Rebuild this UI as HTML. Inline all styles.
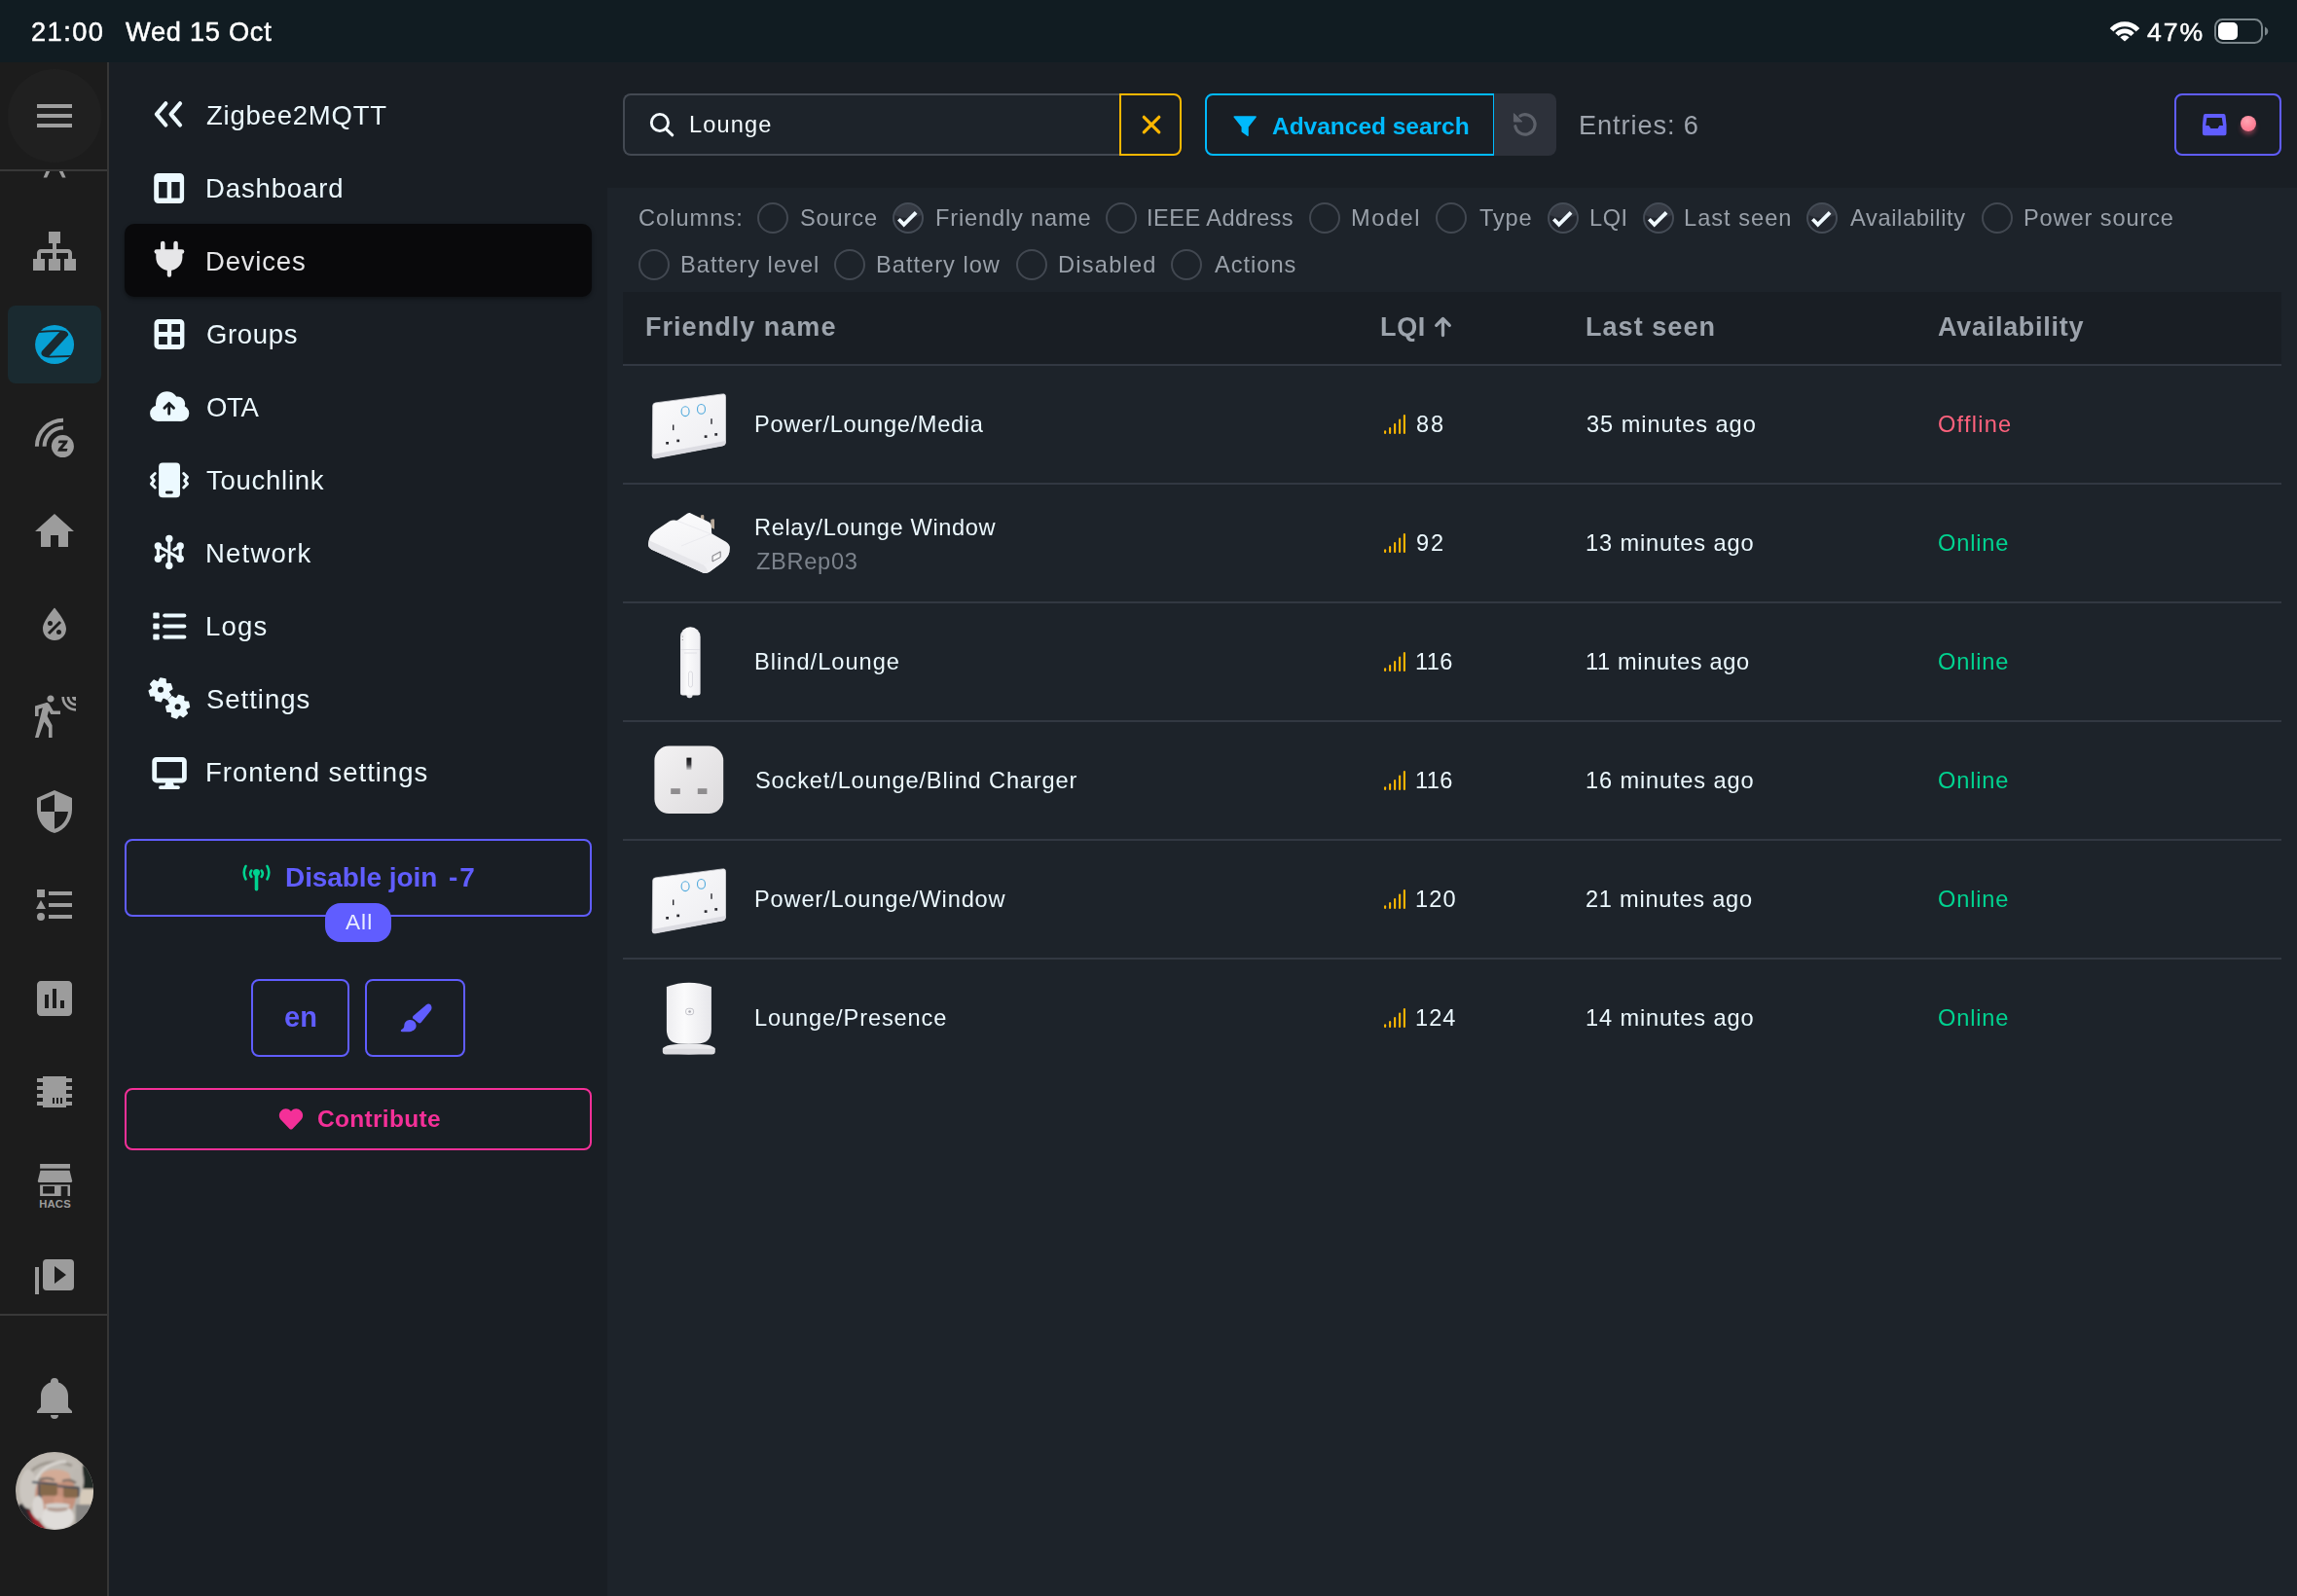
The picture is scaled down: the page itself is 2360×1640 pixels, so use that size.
<!DOCTYPE html>
<html lang="en"><head><meta charset="utf-8"><title>Zigbee2MQTT - Devices</title>
<style>
html,body{margin:0;padding:0;background:#1d232a;}
body{width:2360px;height:1640px;position:relative;overflow:hidden;font-family:"Liberation Sans",sans-serif;}
.b{position:absolute;box-sizing:border-box;display:block;}
.t{position:absolute;white-space:nowrap;line-height:1;will-change:transform;}
</style></head><body>
<div class="layers" aria-hidden="true">
<div class="b" style="left:0px;top:0px;width:2360px;height:64px;background:#111c22;"></div>
<div class="b" style="left:0px;top:64px;width:112px;height:1576px;background:#1c1c1c;border-right:2px solid #363636;"></div>
<div class="b" style="left:112px;top:64px;width:2248px;height:1576px;background:#191e24;"></div>
<div class="b" style="left:624px;top:193px;width:1736px;height:1447px;background:#1d232a;"></div>
</div>
<header class="statusbar" aria-label="Status bar">
<span class="t" style="left:32.0px;top:19.0px;font-size:27.2px;color:#fff;letter-spacing:1.45px;-webkit-text-stroke:0.5px #fff;">21:00</span>
<span class="t" style="left:128.8px;top:19.0px;font-size:27.2px;color:#fff;letter-spacing:0.74px;-webkit-text-stroke:0.5px #fff;">Wed 15 Oct</span>
<span class="t" style="left:2206.2px;top:19.6px;font-size:26.6px;color:#fff;letter-spacing:1.90px;-webkit-text-stroke:0.5px #fff;">47%</span>
<svg class="b" style="left:2164px;top:18px;" width="40" height="28" viewBox="2164 18 40 28"><defs><clipPath id="wf"><path d="M2183,42.500L2159.500,22L2159.500,10H2206.500V22Z"/></clipPath></defs>
<g clip-path="url(#wf)" fill="none" stroke="#fff"><circle cx="2183" cy="42.300" r="17.600" stroke-width="4.900"/><circle cx="2183" cy="42.300" r="10.500" stroke-width="4.700"/><circle cx="2183" cy="42.300" r="3" stroke-width="6" /></g></svg>
<div class="b" style="left:2275px;top:19px;width:50px;height:26px;border:2.4px solid #7b868b;border-radius:8.500px;"></div>
<div class="b" style="left:2279px;top:23px;width:20px;height:18px;background:#fff;border-radius:5px;"></div>
<svg class="b" style="left:2326px;top:24px;" width="6" height="16" viewBox="2326 24 6 16"><path fill="#7b868b" d="M2327,27.400Q2330.300,29 2330.300,32T2327,36.600Z"/></svg>
</header>
<aside class="ha-sidebar" aria-label="Home Assistant sidebar">
<div class="b" style="left:8px;top:71px;width:96px;height:96px;border-radius:50%;background:#202020;"></div>
<div class="b" style="left:0px;top:174px;width:110px;height:2px;background:#383838;"></div>
<div class="b" style="left:0px;top:1350px;width:110px;height:2px;background:#383838;"></div>
<div class="b" style="left:8px;top:314px;width:96px;height:80px;border-radius:8px;background:#1a2a30;"></div>
<svg class="b" style="left:32px;top:95px;" width="48" height="48" viewBox="0 0 24 24"><path fill="#9e9e9e" d="M3,6H21V8H3V6M3,11H21V13H3V11M3,16H21V18H3V16Z"/></svg>
<svg class="b" style="left:40px;top:176px;" width="32" height="8" viewBox="0 0 32 8"><path fill="#9c9c9c" d="M7.400,0H11.200L8.200,6.400H4.600ZM20.800,0H24.600L27.600,6.400H24Z"/></svg>
<svg class="b" style="left:32px;top:234px;" width="48" height="48" viewBox="0 0 24 24"><path fill="#9c9c9c" d="M9,2V8H11V11H5C3.89,11 3,11.89 3,13V16H1V22H7V16H5V13H11V16H9V22H15V16H13V13H19V16H17V22H23V16H21V13C21,11.89 20.11,11 19,11H13V8H15V2H9Z"/></svg>
<svg class="b" style="left:32px;top:330px;" width="48" height="48" viewBox="0 0 48 48"><circle cx="24.070" cy="24.050" r="20" fill="#07a1d5"/>
<path fill="#1a2a30" d="M6.200,11.100Q8,10.200 9.300,9.900Q18,9 27.600,9.300Q32,9.400 34.600,10Q37.200,10.800 37.800,12.500Q38.400,13.600 38.100,14.600L18.500,35.650L41.300,35.100L40.600,36.350Q39.500,36.800 38.100,36.900L17.750,37.600Q14.800,37.400 12.800,36.350Q10.500,35.200 10.400,33.200Q10.300,31.800 11.100,30.700L29.300,11.100Q18,11.300 7.900,12Z"/></svg>
<svg class="b" style="left:32px;top:426px;" width="48" height="48" viewBox="0 0 48 48"><path fill="none" stroke="#9c9c9c" stroke-width="4" d="M5.900,32.840A27.100,27.100 0 0 1 33,5.740"/>
<path fill="none" stroke="#9c9c9c" stroke-width="4" d="M13.600,32.840A19.400,19.400 0 0 1 33,13.440"/>
<circle cx="32.400" cy="32.560" r="13.100" fill="#1c1c1c"/><circle cx="32.400" cy="32.560" r="11.500" fill="#9c9c9c"/>
<path fill="#1c1c1c" d="M28.600,26.500H37.800L36.900,29.200L32.100,35H37.500L36.600,37.800H27.200L28.100,35L32.900,29.300H27.700Z"/></svg>
<svg class="b" style="left:32px;top:522px;" width="48" height="48" viewBox="0 0 24 24"><path fill="#9c9c9c" d="M10,20V14H14V20H19V12H22L12,3L2,12H5V20H10Z"/></svg>
<svg class="b" style="left:32px;top:618px;" width="48" height="48" viewBox="0 0 24 24"><path fill="#9c9c9c" d="M12,3.25C12,3.25 6,10 6,14C6,17.32 8.69,20 12,20A6,6 0 0,0 18,14C18,10 12,3.25 12,3.25M14.47,9.97L15.53,11.03L9.53,17.03L8.47,15.97M9.75,10A1.25,1.25 0 0,1 11,11.25A1.25,1.25 0 0,1 9.75,12.5A1.25,1.25 0 0,1 8.5,11.25A1.25,1.25 0 0,1 9.75,10M14.25,14.5A1.25,1.25 0 0,1 15.5,15.75A1.25,1.25 0 0,1 14.25,17A1.25,1.25 0 0,1 13,15.75A1.25,1.25 0 0,1 14.25,14.5Z"/></svg>
<svg class="b" style="left:32px;top:714px;" width="48" height="48" viewBox="0 0 24 24"><path fill="#9c9c9c" d="M10,0.2C9,0.2 8.2,1 8.2,2C8.2,3 9,3.8 10,3.8C11,3.8 11.8,3 11.8,2C11.8,1 11,0.2 10,0.2M15.67,1A7.33,7.33 0 0,0 23,8.33V7A6,6 0 0,1 17,1H15.67M18.33,1C18.33,3.58 20.42,5.67 23,5.67V4.33C21.16,4.33 19.67,2.84 19.67,1H18.33M21,1A2,2 0 0,0 23,3V1H21M7.92,4.03C7.75,4.03 7.58,4.06 7.42,4.11L2,5.8V11H3.8V7.33L5.91,6.67L2,22H3.8L6.67,13.89L9,17V22H10.8V15.59L8.31,11.05L9.04,8.18L10.12,10H15V8.2H11.38L9.38,4.87C9.08,4.37 8.54,4.03 7.92,4.03Z"/></svg>
<svg class="b" style="left:32px;top:810px;" width="48" height="48" viewBox="0 0 24 24"><path fill="#9c9c9c" d="M12,1L3,5V11C3,16.55 6.84,21.74 12,23C17.16,21.74 21,16.55 21,11V5L12,1M12,11.99H19C18.47,16.11 15.72,19.78 12,20.93V12H5V6.3L12,3.19V11.99Z"/></svg>
<svg class="b" style="left:32px;top:906px;" width="48" height="48" viewBox="0 0 24 24"><path fill="#9c9c9c" d="M5,9.5L7.5,14H2.5L5,9.5M3,4H7V8H3V4M5,20A2,2 0 0,0 7,18A2,2 0 0,0 5,16A2,2 0 0,0 3,18A2,2 0 0,0 5,20M9,5V7H21V5H9M9,19H21V17H9V19M9,13H21V11H9V13Z"/></svg>
<svg class="b" style="left:32px;top:1002px;" width="48" height="48" viewBox="0 0 24 24"><path fill="#9c9c9c" d="M9 17H7V10H9V17M13 17H11V7H13V17M17 17H15V13H17V17M19 3H5C3.9 3 3 3.9 3 5V19C3 20.1 3.9 21 5 21H19C20.1 21 21 20.1 21 19V5C21 3.9 20.1 3 19 3Z"/></svg>
<svg class="b" style="left:32px;top:1098px;" width="48" height="48" viewBox="0 0 24 24"><path fill="#9c9c9c" d="M6,4H18V5H21V7H18V9H21V11H18V13H21V15H18V17H21V19H18V20H6V19H3V17H6V15H3V13H6V11H3V9H6V7H3V5H6V4M11,15V18H12V15H11M13,15V18H14V15H13M15,15V18H16V15H15Z"/></svg>
<svg class="b" style="left:32px;top:1412px;" width="48" height="48" viewBox="0 0 24 24"><path fill="#9c9c9c" d="M21,19V20H3V19L5,17V11C5,7.9 7.03,5.17 10,4.29C10,4.19 10,4.1 10,4A2,2 0 0,1 12,2A2,2 0 0,1 14,4C14,4.1 14,4.19 14,4.29C16.97,5.17 19,7.9 19,11V17L21,19M14,21A2,2 0 0,1 12,23A2,2 0 0,1 10,21"/></svg>
<svg class="b" style="left:32px;top:1194px;" width="48" height="48" viewBox="0 0 48 48"><rect x="9.1" y="2" width="30.9" height="4.7" fill="#9c9c9c"/>
<path fill="#9c9c9c" d="M9.5,8.8H39.5L42.2,19.4Q42.2,21 40.8,21H8.2Q6.8,21 6.8,19.4Z"/>
<path fill="#9c9c9c" fill-rule="evenodd" d="M9.1,23.4H40V35H37.5V25H30.7V35H9.1ZM12.1,25H24V32.6H12.1Z"/>
<text x="24.55" y="46.8" text-anchor="middle" font-family="Liberation Sans, sans-serif" font-weight="700" font-size="11.3" letter-spacing="0.2" fill="#9c9c9c">HACS</text></svg>
<svg class="b" style="left:32px;top:1290px;" width="48" height="48" viewBox="0 0 48 48"><rect x="4" y="12" width="4" height="28" fill="#9c9c9c"/>
<path fill="#9c9c9c" fill-rule="evenodd" d="M16,4H40A4,4 0 0 1 44,8V32A4,4 0 0 1 40,36H16A4,4 0 0 1 12,32V8A4,4 0 0 1 16,4ZM24,11V29L36,20Z"/></svg>
<svg class="b" style="left:16px;top:1492px;" width="80" height="80" viewBox="0 0 80 80"><defs><clipPath id="avc"><circle cx="40" cy="40" r="40"/></clipPath><filter id="avb" x="-20%" y="-20%" width="140%" height="140%"><feGaussianBlur stdDeviation="1.300"/></filter></defs>
<g clip-path="url(#avc)"><rect width="80" height="80" fill="#b9b3ab"/>
<g filter="url(#avb)">
<rect x="69" y="14" width="14" height="26" fill="#222b27"/>
<rect x="66" y="38" width="18" height="18" fill="#d6cbbb"/>
<rect x="62" y="54" width="24" height="30" fill="#878684"/>
<path d="M0,58L10,50L24,80L0,80Z" fill="#26252a"/>
<path d="M11,58L22,80L32,80Z" fill="#9c1c26"/>
<ellipse cx="38" cy="20" rx="30" ry="19" fill="#bfbab3"/>
<path d="M14,22Q30,4 58,14" stroke="#9d978f" stroke-width="3" fill="none"/>
<path d="M20,30Q30,10 52,10" stroke="#d9d5d0" stroke-width="3" fill="none"/>
<ellipse cx="13" cy="38" rx="9" ry="20" fill="#cbc6c0"/>
<ellipse cx="64" cy="30" rx="6" ry="14" fill="#bdb8b1"/>
<ellipse cx="41" cy="44" rx="21" ry="25" fill="#c4917b"/>
<ellipse cx="41" cy="25" rx="15" ry="7" fill="#d3ab96"/>
<path d="M24,29Q32,25 40,29M48,30Q56,27 62,32" stroke="#7b7068" stroke-width="2.400" fill="none"/>
<rect x="24" y="33" width="19" height="12" rx="3" fill="#86694c"/>
<rect x="49" y="35" width="16" height="12" rx="3" fill="#86694c"/>
<path d="M17,31L43,33M43,35L66,37M24,33V44Q24,46 27,46M65,37V46" stroke="#3f4d5c" stroke-width="1.800" fill="none"/>
<ellipse cx="44" cy="50" rx="5" ry="5" fill="#d09a84"/>
<ellipse cx="43" cy="67" rx="17" ry="13" fill="#dfdcd9"/>
<ellipse cx="43" cy="58.500" rx="11" ry="3" fill="#b39f95"/>
<ellipse cx="43" cy="55" rx="13" ry="2.600" fill="#d4d0cc"/>
<ellipse cx="23" cy="57" rx="6" ry="12" fill="#d9d5d1"/>
</g></g></svg>
</aside>
<nav class="z2m-menu" aria-label="Zigbee2MQTT menu">
<div class="b" style="left:128px;top:230px;width:480px;height:75px;border-radius:10px;background:#09090b;box-shadow:0 2px 4px rgba(0,0,0,.4);"></div>
<span class="t" style="left:212.1px;top:104.6px;font-size:27.5px;color:#ecf9ff;letter-spacing:0.78px;">Zigbee2MQTT</span>
<span class="t" style="left:210.7px;top:179.7px;font-size:27.5px;color:#ecf9ff;letter-spacing:0.87px;">Dashboard</span>
<span class="t" style="left:210.7px;top:254.6px;font-size:27.5px;color:#e6e6e8;letter-spacing:0.81px;">Devices</span>
<span class="t" style="left:211.6px;top:329.6px;font-size:27.5px;color:#ecf9ff;letter-spacing:0.64px;">Groups</span>
<span class="t" style="left:211.7px;top:404.6px;font-size:27.5px;color:#ecf9ff;letter-spacing:-0.31px;">OTA</span>
<span class="t" style="left:212.4px;top:479.6px;font-size:27.5px;color:#ecf9ff;letter-spacing:0.74px;">Touchlink</span>
<span class="t" style="left:210.7px;top:554.6px;font-size:27.5px;color:#ecf9ff;letter-spacing:1.23px;">Network</span>
<span class="t" style="left:210.7px;top:629.6px;font-size:27.5px;color:#ecf9ff;letter-spacing:1.20px;">Logs</span>
<span class="t" style="left:211.8px;top:704.6px;font-size:27.5px;color:#ecf9ff;letter-spacing:0.98px;">Settings</span>
<span class="t" style="left:210.7px;top:779.6px;font-size:27.5px;color:#ecf9ff;letter-spacing:0.98px;">Frontend settings</span>
<div class="b" style="left:128px;top:862px;width:480px;height:80px;border:2px solid #605dff;border-radius:8px;"></div>
<span class="t" style="left:292.7px;top:887.5px;font-size:28px;color:#605dff;font-weight:700;letter-spacing:-0.08px;">Disable join</span>
<span class="t" style="left:461.2px;top:887.5px;font-size:28px;color:#605dff;font-weight:700;letter-spacing:1.90px;">-7</span>
<div class="b" style="left:334px;top:928px;width:68px;height:40px;background:#605dff;border-radius:16px;"></div>
<span class="t" style="left:355.0px;top:937.0px;font-size:22.6px;color:#e9edff;letter-spacing:1.03px;">All</span>
<div class="b" style="left:258px;top:1006px;width:101px;height:80px;border:2px solid #605dff;border-radius:8px;"></div>
<span class="t" style="left:291.5px;top:1031.4px;font-size:29px;color:#605dff;font-weight:700;letter-spacing:0.09px;">en</span>
<div class="b" style="left:375px;top:1006px;width:103px;height:80px;border:2px solid #605dff;border-radius:8px;"></div>
<div class="b" style="left:128px;top:1118px;width:480px;height:64px;border:2px solid #f43098;border-radius:8px;"></div>
<span class="t" style="left:325.7px;top:1137.8px;font-size:24.5px;color:#f43098;font-weight:700;letter-spacing:0.31px;">Contribute</span>
<svg class="b" style="left:150px;top:96px;" width="48" height="44" viewBox="150 96 48 44"><path d="M170.3,106.3 L160.9,117.3 L170.3,128.5 M185,106.3 L175.6,117.3 L185,128.5" fill="none" stroke="#ecf9ff" stroke-width="4.2" stroke-linecap="round" stroke-linejoin="round"/></svg>
<svg class="b" style="left:150px;top:170px;" width="48" height="48" viewBox="150 170 48 48"><path fill="#ecf9ff" fill-rule="evenodd" d="M162.7,178H184.6A4.5,4.5 0 0 1 189.1,182.500V204.500A4.5,4.5 0 0 1 184.600,209H162.700A4.5,4.5 0 0 1 158.200,204.500V182.500A4.5,4.5 0 0 1 162.700,178ZM163.100,187V203.600H171.700V187ZM176.200,187V203.600H184.700V187Z"/></svg>
<svg class="b" style="left:150px;top:240px;" width="48" height="52" viewBox="150 240 48 52"><rect x="165" y="247.8" width="4.5" height="12" rx="2.2" fill="#e6e6e8"/><rect x="178.300" y="247.8" width="4.5" height="12" rx="2.2" fill="#e6e6e8"/>
<rect x="158.5" y="256.2" width="30.8" height="4.6" rx="2.3" fill="#e6e6e8"/>
<path fill="#e6e6e8" d="M160.300,258.500H187.400V264.500A13.550,13.550 0 0 1 160.300,264.500Z"/>
<rect x="171.800" y="272" width="4.3" height="12.800" rx="2.1" fill="#e6e6e8"/></svg>
<svg class="b" style="left:150px;top:320px;" width="48" height="48" viewBox="150 320 48 48"><path fill="#ecf9ff" fill-rule="evenodd" d="M163,328H184.900A4.500,4.500 0 0 1 189.400,332.500V354.400A4.500,4.500 0 0 1 184.900,358.900H163A4.500,4.500 0 0 1 158.500,354.400V332.500A4.500,4.500 0 0 1 163,328ZM163.100,332.900V340.900H171.900V332.900ZM176.300,332.900V340.900H185V332.900ZM163.100,346.100V354.100H171.900V346.100ZM176.300,346.100V354.100H185V346.100Z"/></svg>
<svg class="b" style="left:150px;top:396px;" width="48" height="44" viewBox="150 396 48 44"><g fill="#ecf9ff"><circle cx="162.200" cy="424.800" r="8.1"/><circle cx="186.200" cy="424.800" r="8.100"/><rect x="162.200" y="418" width="24" height="14.900"/>
<circle cx="171.500" cy="413.500" r="11.300"/><circle cx="182.700" cy="415" r="7.500"/><rect x="160" y="414" width="28" height="12"/></g>
<path d="M173.700,425.200V414.800M168.900,419.300L173.700,414.400L178.500,419.300" fill="none" stroke="#191e24" stroke-width="2.900" stroke-linecap="round" stroke-linejoin="round"/></svg>
<svg class="b" style="left:150px;top:470px;" width="48" height="46" viewBox="150 470 48 46"><rect x="163.100" y="475.600" width="21.900" height="35.700" rx="4" fill="#ecf9ff"/>
<rect x="169.900" y="504.600" width="7.900" height="2.900" rx="1.450" fill="#191e24"/>
<path d="M159.300,486.500L155.500,490.300L158.300,493.700L155.500,497.200L159.300,501M188.700,486.500L192.500,490.300L189.700,493.700L192.500,497.200L188.700,501" fill="none" stroke="#ecf9ff" stroke-width="3" stroke-linecap="round" stroke-linejoin="round"/></svg>
<svg class="b" style="left:150px;top:546px;" width="48" height="44" viewBox="150 546 48 44"><path d="M173.800,553.500V581.200M162.400,561V574.200M185.200,561V574.200M162.400,561L185.200,574.200M162.400,574.200L168.800,570.400M185.200,561L178.800,564.800" fill="none" stroke="#ecf9ff" stroke-width="3.100" stroke-linecap="round"/><circle cx="173.8" cy="553.5" r="3.700" fill="#ecf9ff"/><circle cx="173.8" cy="581.2" r="3.700" fill="#ecf9ff"/><circle cx="162.4" cy="561" r="3.700" fill="#ecf9ff"/><circle cx="162.4" cy="574.2" r="3.700" fill="#ecf9ff"/><circle cx="185.2" cy="561" r="3.700" fill="#ecf9ff"/><circle cx="185.2" cy="574.2" r="3.700" fill="#ecf9ff"/></svg>
<svg class="b" style="left:150px;top:622px;" width="48" height="44" viewBox="150 622 48 44"><rect x="157.300" y="629.4" width="6.400" height="6.200" rx="1.400" fill="#ecf9ff"/><rect x="167.200" y="630.4" width="24.200" height="4.200" rx="2.100" fill="#ecf9ff"/><rect x="157.300" y="640.4" width="6.400" height="6.200" rx="1.400" fill="#ecf9ff"/><rect x="167.200" y="641.4" width="24.200" height="4.200" rx="2.100" fill="#ecf9ff"/><rect x="157.300" y="651.4" width="6.400" height="6.200" rx="1.400" fill="#ecf9ff"/><rect x="167.200" y="652.4" width="24.200" height="4.200" rx="2.100" fill="#ecf9ff"/></svg>
<svg class="b" style="left:150px;top:694px;" width="48" height="48" viewBox="150 694 48 48"><path d="M163.21,700.39 L164.79,697.00 L169.99,698.11 L170.05,701.84 L171.39,703.05 L175.11,702.72 L176.76,707.77 L173.55,709.70 L173.18,711.46 L175.32,714.52 L171.77,718.47 L168.50,716.66 L166.79,717.21 L165.21,720.60 L160.01,719.49 L159.95,715.76 L158.61,714.55 L154.89,714.88 L153.24,709.83 L156.45,707.90 L156.82,706.14 L154.68,703.08 L158.23,699.13 L161.50,700.94Z" fill="#ecf9ff" stroke="#ecf9ff" stroke-width="1.6" stroke-linejoin="round"/><circle cx="165" cy="708.8" r="3.0" fill="#191e24"/><path d="M189.56,721.15 L193.29,721.21 L194.40,726.41 L191.01,727.99 L190.46,729.70 L192.27,732.97 L188.32,736.52 L185.26,734.38 L183.50,734.75 L181.57,737.96 L176.52,736.31 L176.85,732.59 L175.64,731.25 L171.91,731.19 L170.80,725.99 L174.19,724.41 L174.74,722.70 L172.93,719.43 L176.88,715.88 L179.94,718.02 L181.70,717.65 L183.63,714.44 L188.68,716.09 L188.35,719.81Z" fill="#ecf9ff" stroke="#ecf9ff" stroke-width="1.6" stroke-linejoin="round"/><circle cx="182.6" cy="726.2" r="3.0" fill="#191e24"/></svg>
<svg class="b" style="left:150px;top:770px;" width="48" height="48" viewBox="150 770 48 48"><path fill="#ecf9ff" fill-rule="evenodd" d="M160.800,777.900H187.300A4.500,4.500 0 0 1 191.800,782.400V799.900A4.500,4.500 0 0 1 187.300,804.400H160.800A4.500,4.500 0 0 1 156.300,799.900V782.400A4.500,4.500 0 0 1 160.800,777.900ZM161.100,782.900V799.600H187V782.900Z"/>
<path fill="#ecf9ff" d="M170.300,804H177.800L179.200,808.500H168.900Z"/><rect x="163.100" y="807.300" width="21.700" height="3.800" rx="1.900" fill="#ecf9ff"/></svg>
<svg class="b" style="left:244px;top:884px;" width="40" height="36" viewBox="244 884 40 36"><circle cx="263.500" cy="896.600" r="3.500" fill="#00d390"/><rect x="261.700" y="896" width="3.600" height="19.500" rx="1.800" fill="#00d390"/>
<path d="M258.300,894.600Q255.900,897.700 258.300,900.900M268.700,894.600Q271.100,897.700 268.700,900.900M252.500,890Q248.900,896.600 252.500,903.300M274.500,890Q278.100,896.600 274.500,903.300" fill="none" stroke="#00d390" stroke-width="2.600" stroke-linecap="round"/></svg>
<svg class="b" style="left:404px;top:1024px;" width="48" height="44" viewBox="404 1024 48 44"><path fill="#605dff" d="M438,1032.400Q440.500,1030.800 442.400,1032.400Q444.300,1034.500 442.900,1038L432.600,1050.700Q431.300,1052.100 429.900,1051.100L424.300,1046.500Q423.400,1045.300 424.500,1044.100Z"/>
<path fill="#605dff" d="M421.500,1047.900C425.500,1047.900 427.600,1051 427.600,1054C427.600,1058 423.500,1060.300 419,1060.300L413.200,1060.300C411.500,1060.300 411.200,1058.400 412.800,1057.700C415.500,1056.500 415.200,1054.500 415.400,1053C415.800,1050 418,1047.900 421.500,1047.900Z"/></svg>
<svg class="b" style="left:284px;top:1134px;" width="32" height="32" viewBox="284 1134 32 32"><path fill="#f43098" d="M299,1160.500C298.400,1160.500 297.900,1160.300 297.500,1159.900L289.200,1151.300C286.200,1148.300 286.100,1144.200 288.900,1141.400C291.600,1138.700 295.900,1138.700 298.600,1141.400L299,1141.900L299.400,1141.400C302.100,1138.700 306.400,1138.700 309.100,1141.400C311.900,1144.200 311.800,1148.300 308.800,1151.300L300.500,1159.900C300.100,1160.300 299.600,1160.500 299,1160.500Z"/></svg>
</nav>
<section class="toolbar" aria-label="Search toolbar">
<div class="b" style="left:640px;top:96px;width:512px;height:64px;border:2px solid #434952;border-right:none;border-radius:8px 0 0 8px;background:#1d232a;"></div>
<div class="b" style="left:1150px;top:96px;width:64px;height:64px;border:2px solid #fcb700;border-radius:0 8px 8px 0;"></div>
<span class="t" style="left:708.3px;top:116.7px;font-size:23.6px;color:#f4fbff;letter-spacing:1.15px;">Lounge</span>
<div class="b" style="left:1238px;top:96px;width:298px;height:64px;border:2px solid #00bafe;border-radius:8px 0 0 8px;"></div>
<span class="t" style="left:1306.7px;top:117.5px;font-size:24.5px;color:#00bafe;font-weight:700;letter-spacing:-0.02px;">Advanced search</span>
<div class="b" style="left:1535px;top:96px;width:64px;height:64px;background:#2d313a;border-radius:0 8px 8px 0;"></div>
<span class="t" style="left:1622.3px;top:115.1px;font-size:27.2px;color:#9ea4ad;letter-spacing:0.90px;">Entries: 6</span>
<div class="b" style="left:2234px;top:96px;width:110px;height:64px;border:2px solid #605dff;border-radius:8px;"></div>
<svg class="b" style="left:660px;top:108px;" width="40" height="40" viewBox="660 108 40 40"><circle cx="677.900" cy="126" r="8.600" fill="none" stroke="#f4fbff" stroke-width="2.900"/><path d="M684.300,132.600L690.800,138.800" stroke="#f4fbff" stroke-width="3" stroke-linecap="round"/></svg>
<svg class="b" style="left:1166px;top:110px;" width="36" height="36" viewBox="1166 110 36 36"><path d="M1175.300,120.300L1190.800,135.800M1190.800,120.300L1175.300,135.800" stroke="#fcb700" stroke-width="3.200" stroke-linecap="round"/></svg>
<svg class="b" style="left:1260px;top:112px;" width="40" height="36" viewBox="1260 112 40 36"><path fill="#00bafe" stroke="#00bafe" stroke-width="1.500" stroke-linejoin="round" d="M1268.200,120H1290.100L1282,130.300V139.200L1276.300,135.200V130.300Z"/></svg>
<svg class="b" style="left:1546px;top:108px;" width="44" height="40" viewBox="1546 108 44 40"><path d="M1556.850,129.670A10.200,10.200 0 1 0 1561.800,119.070" fill="none" stroke="#5d616a" stroke-width="3.100" stroke-linecap="round"/><path fill="#5d616a" stroke="#5d616a" stroke-width="1" stroke-linejoin="round" d="M1555.400,116.600V125H1563.800Z"/></svg>
<svg class="b" style="left:2258px;top:112px;" width="36" height="32" viewBox="2258 112 36 32"><path fill="#605dff" fill-rule="evenodd" d="M2265.700,117.100H2284.700Q2286.300,117.100 2286.500,118.700L2287.500,128.500V137Q2287.500,139.200 2285.300,139.200H2265.100Q2262.900,139.200 2262.900,137V128.500L2263.900,118.700Q2264.100,117.100 2265.700,117.100ZM2267.400,121.100L2266.200,128.900H2269.500L2271.400,131.900H2278.600L2280.300,128.900H2284L2282.800,121.100Z"/></svg>
<div class="b" style="left:2302px;top:119px;width:16.4px;height:16.4px;border-radius:50%;background:radial-gradient(circle at 42% 32%,#ffa6b3 0%,#ff8499 50%,#ff6e87 100%);box-shadow:0 4px 5px -1px rgba(255,98,125,.5);"></div>
</section>
<section class="columns" aria-label="Column visibility">
<span class="t" style="left:655.7px;top:212.7px;font-size:23.6px;color:#99a0a9;letter-spacing:1.01px;">Columns:</span>
<div class="b" style="left:778px;top:207.8px;width:32px;height:32px;border-radius:50%;border:2px solid #424851;"></div>
<span class="t" style="left:821.9px;top:212.7px;font-size:23.6px;color:#99a0a9;letter-spacing:0.87px;">Source</span>
<div class="b" style="left:917px;top:207.8px;width:32px;height:32px;border-radius:50%;border:2px solid #454c56;background:radial-gradient(ellipse 85% 56% at 50% -4%,#363b44 0%,#333841 92%,#22262e 100%) #22262e;"></div>
<svg class="b" style="left:917px;top:207.8px;" width="32" height="32" viewBox="0 0 32 32"><path d="M6.4 17.2 L11.7 22.8 L24.1 10.4" fill="none" stroke="#f0f9ff" stroke-width="3.8"/></svg>
<span class="t" style="left:960.5px;top:212.7px;font-size:23.6px;color:#99a0a9;letter-spacing:0.84px;">Friendly name</span>
<div class="b" style="left:1136px;top:207.8px;width:32px;height:32px;border-radius:50%;border:2px solid #424851;"></div>
<span class="t" style="left:1178.3px;top:212.7px;font-size:23.6px;color:#99a0a9;letter-spacing:0.45px;">IEEE Address</span>
<div class="b" style="left:1345px;top:207.8px;width:32px;height:32px;border-radius:50%;border:2px solid #424851;"></div>
<span class="t" style="left:1388.1px;top:212.7px;font-size:23.6px;color:#99a0a9;letter-spacing:1.56px;">Model</span>
<div class="b" style="left:1475px;top:207.8px;width:32px;height:32px;border-radius:50%;border:2px solid #424851;"></div>
<span class="t" style="left:1519.5px;top:212.7px;font-size:23.6px;color:#99a0a9;letter-spacing:0.81px;">Type</span>
<div class="b" style="left:1590px;top:207.8px;width:32px;height:32px;border-radius:50%;border:2px solid #454c56;background:radial-gradient(ellipse 85% 56% at 50% -4%,#363b44 0%,#333841 92%,#22262e 100%) #22262e;"></div>
<svg class="b" style="left:1590px;top:207.8px;" width="32" height="32" viewBox="0 0 32 32"><path d="M6.4 17.2 L11.7 22.8 L24.1 10.4" fill="none" stroke="#f0f9ff" stroke-width="3.8"/></svg>
<span class="t" style="left:1633.1px;top:212.7px;font-size:23.6px;color:#99a0a9;letter-spacing:0.53px;">LQI</span>
<div class="b" style="left:1688px;top:207.8px;width:32px;height:32px;border-radius:50%;border:2px solid #454c56;background:radial-gradient(ellipse 85% 56% at 50% -4%,#363b44 0%,#333841 92%,#22262e 100%) #22262e;"></div>
<svg class="b" style="left:1688px;top:207.8px;" width="32" height="32" viewBox="0 0 32 32"><path d="M6.4 17.2 L11.7 22.8 L24.1 10.4" fill="none" stroke="#f0f9ff" stroke-width="3.8"/></svg>
<span class="t" style="left:1730.1px;top:212.7px;font-size:23.6px;color:#99a0a9;letter-spacing:1.02px;">Last seen</span>
<div class="b" style="left:1856px;top:207.8px;width:32px;height:32px;border-radius:50%;border:2px solid #454c56;background:radial-gradient(ellipse 85% 56% at 50% -4%,#363b44 0%,#333841 92%,#22262e 100%) #22262e;"></div>
<svg class="b" style="left:1856px;top:207.8px;" width="32" height="32" viewBox="0 0 32 32"><path d="M6.4 17.2 L11.7 22.8 L24.1 10.4" fill="none" stroke="#f0f9ff" stroke-width="3.8"/></svg>
<span class="t" style="left:1901.0px;top:212.7px;font-size:23.6px;color:#99a0a9;letter-spacing:0.64px;">Availability</span>
<div class="b" style="left:2036px;top:207.8px;width:32px;height:32px;border-radius:50%;border:2px solid #424851;"></div>
<span class="t" style="left:2079.1px;top:212.7px;font-size:23.6px;color:#99a0a9;letter-spacing:0.88px;">Power source</span>
<div class="b" style="left:655.8px;top:256.2px;width:32px;height:32px;border-radius:50%;border:2px solid #424851;"></div>
<span class="t" style="left:699.3px;top:261.1px;font-size:23.6px;color:#99a0a9;letter-spacing:1.04px;">Battery level</span>
<div class="b" style="left:857px;top:256.2px;width:32px;height:32px;border-radius:50%;border:2px solid #424851;"></div>
<span class="t" style="left:900.1px;top:261.1px;font-size:23.6px;color:#99a0a9;letter-spacing:1.02px;">Battery low</span>
<div class="b" style="left:1044px;top:256.2px;width:32px;height:32px;border-radius:50%;border:2px solid #424851;"></div>
<span class="t" style="left:1087.1px;top:261.1px;font-size:23.6px;color:#99a0a9;letter-spacing:1.24px;">Disabled</span>
<div class="b" style="left:1202.5px;top:256.2px;width:32px;height:32px;border-radius:50%;border:2px solid #424851;"></div>
<span class="t" style="left:1247.5px;top:261.1px;font-size:23.6px;color:#99a0a9;letter-spacing:1.00px;">Actions</span>
</section>
<main class="devices" aria-label="Devices table">
<div class="b" style="left:640px;top:300px;width:1704px;height:75px;background:#191e24;"></div>
<span class="t" style="left:663.2px;top:323.3px;font-size:27px;color:#9ca3ac;font-weight:700;letter-spacing:1.03px;">Friendly name</span>
<span class="t" style="left:1417.6px;top:323.3px;font-size:27px;color:#9ca3ac;font-weight:700;letter-spacing:0.66px;">LQI</span>
<span class="t" style="left:1628.8px;top:323.3px;font-size:27px;color:#9ca3ac;font-weight:700;letter-spacing:1.05px;">Last seen</span>
<span class="t" style="left:1991.3px;top:323.3px;font-size:27px;color:#9ca3ac;font-weight:700;letter-spacing:0.72px;">Availability</span>
<div class="b" style="left:640px;top:374px;width:1704px;height:2px;background:#323842;"></div>
<span class="t" style="left:775.0px;top:424.9px;font-size:23.6px;color:#ecf9ff;letter-spacing:0.70px;">Power/Lounge/Media</span>
<svg class="b" style="left:1420px;top:423px;" width="26" height="26" viewBox="1420 423 26 26"><rect x="1422.05" y="442.3" width="2.1" height="3.7" rx="1.05" fill="#fcb700"/><rect x="1427.05" y="439.1" width="2.1" height="6.9" rx="1.05" fill="#fcb700"/><rect x="1432.05" y="435.0" width="2.1" height="11" rx="1.05" fill="#fcb700"/><rect x="1437.05" y="430.4" width="2.1" height="15.6" rx="1.05" fill="#fcb700"/><rect x="1441.85" y="426.0" width="2.1" height="20" rx="1.05" fill="#fcb700"/></svg>
<span class="t" style="left:1455.0px;top:424.9px;font-size:23.6px;color:#ecf9ff;letter-spacing:1.90px;">88</span>
<span class="t" style="left:1629.7px;top:424.9px;font-size:23.6px;color:#ecf9ff;letter-spacing:0.96px;">35 minutes ago</span>
<span class="t" style="left:1990.9px;top:424.9px;font-size:23.6px;color:#ff627d;letter-spacing:1.23px;">Offline</span>
<div class="b" style="left:640px;top:496px;width:1704px;height:2px;background:#323842;"></div>
<span class="t" style="left:775.0px;top:530.5px;font-size:23.6px;color:#ecf9ff;letter-spacing:0.64px;">Relay/Lounge Window</span>
<span class="t" style="left:776.8px;top:566.1px;font-size:23.6px;color:#7c838c;letter-spacing:0.69px;">ZBRep03</span>
<svg class="b" style="left:1420px;top:545px;" width="26" height="26" viewBox="1420 545 26 26"><rect x="1422.05" y="564.3" width="2.1" height="3.7" rx="1.05" fill="#fcb700"/><rect x="1427.05" y="561.1" width="2.1" height="6.9" rx="1.05" fill="#fcb700"/><rect x="1432.05" y="557.0" width="2.1" height="11" rx="1.05" fill="#fcb700"/><rect x="1437.05" y="552.4" width="2.1" height="15.6" rx="1.05" fill="#fcb700"/><rect x="1441.85" y="548.0" width="2.1" height="20" rx="1.05" fill="#fcb700"/></svg>
<span class="t" style="left:1454.9px;top:546.9px;font-size:23.6px;color:#ecf9ff;letter-spacing:1.90px;">92</span>
<span class="t" style="left:1628.8px;top:546.9px;font-size:23.6px;color:#ecf9ff;letter-spacing:0.86px;">13 minutes ago</span>
<span class="t" style="left:1990.9px;top:546.9px;font-size:23.6px;color:#00d390;letter-spacing:0.83px;">Online</span>
<div class="b" style="left:640px;top:618px;width:1704px;height:2px;background:#323842;"></div>
<span class="t" style="left:775.0px;top:668.9px;font-size:23.6px;color:#ecf9ff;letter-spacing:1.02px;">Blind/Lounge</span>
<svg class="b" style="left:1420px;top:667px;" width="26" height="26" viewBox="1420 667 26 26"><rect x="1422.05" y="686.3" width="2.1" height="3.7" rx="1.05" fill="#fcb700"/><rect x="1427.05" y="683.1" width="2.1" height="6.9" rx="1.05" fill="#fcb700"/><rect x="1432.05" y="679.0" width="2.1" height="11" rx="1.05" fill="#fcb700"/><rect x="1437.05" y="674.4" width="2.1" height="15.6" rx="1.05" fill="#fcb700"/><rect x="1441.85" y="670.0" width="2.1" height="20" rx="1.05" fill="#fcb700"/></svg>
<span class="t" style="left:1454.2px;top:668.9px;font-size:23.6px;color:#ecf9ff;letter-spacing:0.35px;">116</span>
<span class="t" style="left:1628.8px;top:668.9px;font-size:23.6px;color:#ecf9ff;letter-spacing:0.66px;">11 minutes ago</span>
<span class="t" style="left:1990.9px;top:668.9px;font-size:23.6px;color:#00d390;letter-spacing:0.83px;">Online</span>
<div class="b" style="left:640px;top:740px;width:1704px;height:2px;background:#323842;"></div>
<span class="t" style="left:775.8px;top:790.9px;font-size:23.6px;color:#ecf9ff;letter-spacing:0.85px;">Socket/Lounge/Blind Charger</span>
<svg class="b" style="left:1420px;top:789px;" width="26" height="26" viewBox="1420 789 26 26"><rect x="1422.05" y="808.3" width="2.1" height="3.7" rx="1.05" fill="#fcb700"/><rect x="1427.05" y="805.1" width="2.1" height="6.9" rx="1.05" fill="#fcb700"/><rect x="1432.05" y="801.0" width="2.1" height="11" rx="1.05" fill="#fcb700"/><rect x="1437.05" y="796.4" width="2.1" height="15.6" rx="1.05" fill="#fcb700"/><rect x="1441.85" y="792.0" width="2.1" height="20" rx="1.05" fill="#fcb700"/></svg>
<span class="t" style="left:1454.2px;top:790.9px;font-size:23.6px;color:#ecf9ff;letter-spacing:0.35px;">116</span>
<span class="t" style="left:1628.8px;top:790.9px;font-size:23.6px;color:#ecf9ff;letter-spacing:0.86px;">16 minutes ago</span>
<span class="t" style="left:1990.9px;top:790.9px;font-size:23.6px;color:#00d390;letter-spacing:0.83px;">Online</span>
<div class="b" style="left:640px;top:862px;width:1704px;height:2px;background:#323842;"></div>
<span class="t" style="left:775.0px;top:912.9px;font-size:23.6px;color:#ecf9ff;letter-spacing:0.83px;">Power/Lounge/Window</span>
<svg class="b" style="left:1420px;top:911px;" width="26" height="26" viewBox="1420 911 26 26"><rect x="1422.05" y="930.3" width="2.1" height="3.7" rx="1.05" fill="#fcb700"/><rect x="1427.05" y="927.1" width="2.1" height="6.9" rx="1.05" fill="#fcb700"/><rect x="1432.05" y="923.0" width="2.1" height="11" rx="1.05" fill="#fcb700"/><rect x="1437.05" y="918.4" width="2.1" height="15.6" rx="1.05" fill="#fcb700"/><rect x="1441.85" y="914.0" width="2.1" height="20" rx="1.05" fill="#fcb700"/></svg>
<span class="t" style="left:1454.2px;top:912.9px;font-size:23.6px;color:#ecf9ff;letter-spacing:1.17px;">120</span>
<span class="t" style="left:1629.4px;top:912.9px;font-size:23.6px;color:#ecf9ff;letter-spacing:0.75px;">21 minutes ago</span>
<span class="t" style="left:1990.9px;top:912.9px;font-size:23.6px;color:#00d390;letter-spacing:0.83px;">Online</span>
<div class="b" style="left:640px;top:984px;width:1704px;height:2px;background:#323842;"></div>
<span class="t" style="left:775.0px;top:1034.9px;font-size:23.6px;color:#ecf9ff;letter-spacing:0.89px;">Lounge/Presence</span>
<svg class="b" style="left:1420px;top:1033px;" width="26" height="26" viewBox="1420 1033 26 26"><rect x="1422.05" y="1052.3" width="2.1" height="3.7" rx="1.05" fill="#fcb700"/><rect x="1427.05" y="1049.1" width="2.1" height="6.9" rx="1.05" fill="#fcb700"/><rect x="1432.05" y="1045.0" width="2.1" height="11" rx="1.05" fill="#fcb700"/><rect x="1437.05" y="1040.4" width="2.1" height="15.6" rx="1.05" fill="#fcb700"/><rect x="1441.85" y="1036.0" width="2.1" height="20" rx="1.05" fill="#fcb700"/></svg>
<span class="t" style="left:1454.2px;top:1034.9px;font-size:23.6px;color:#ecf9ff;letter-spacing:1.06px;">124</span>
<span class="t" style="left:1628.8px;top:1034.9px;font-size:23.6px;color:#ecf9ff;letter-spacing:0.86px;">14 minutes ago</span>
<span class="t" style="left:1990.9px;top:1034.9px;font-size:23.6px;color:#00d390;letter-spacing:0.83px;">Online</span>
<svg class="b" style="left:1470px;top:322px;" width="26" height="28" viewBox="1470 322 26 28"><path d="M1482.500,344.500V327.600M1475.700,334.300L1482.500,327.500L1489.300,334.300" fill="none" stroke="#9ca3ac" stroke-width="3.300" stroke-linecap="round" stroke-linejoin="round"/></svg>
<svg class="b" style="left:664px;top:398px;" width="90" height="80" viewBox="664 398 90 80"><defs><linearGradient id="ds0" x1="0" y1="0" x2="1" y2="1"><stop offset="0" stop-color="#fbfbfc"/><stop offset="1" stop-color="#ececf0"/></linearGradient></defs>
<path fill="url(#ds0)" stroke="#d9d9de" stroke-width="0.8" d="M673.5,413.9L742.600,404.9Q745.500,404.5 745.500,407.5V454.7Q745.500,457.3 742.800,457.9L673,471Q670.200,471.5 670.200,468.6L670.700,417Q670.700,414.3 673.500,413.9Z"/>
<path fill="#dcdce2" d="M670.200,468.6Q670.200,471.5 673,471L742.800,457.9Q745.500,457.3 745.500,454.7L745.500,453L670.200,467Z"/>
<ellipse cx="704.100" cy="422.7" rx="4" ry="4.900" fill="none" stroke="#4fa9dc" stroke-width="1.100"/>
<ellipse cx="720.500" cy="420.4" rx="4" ry="4.900" fill="none" stroke="#4fa9dc" stroke-width="1.100"/>
<g fill="#2a2a30"><rect x="691" y="436.5" width="1.400" height="5.600"/><rect x="730.300" y="430.2" width="1.400" height="5.600"/>
<rect x="684.200" y="454" width="2.800" height="2.600"/><rect x="695.300" y="451.6" width="2.800" height="2.600"/>
<rect x="723.700" y="447.3" width="2.800" height="2.600"/><rect x="734.300" y="445.1" width="2.800" height="2.600"/></g></svg>
<svg class="b" style="left:664px;top:886px;" width="90" height="80" viewBox="664 886 90 80"><defs><linearGradient id="ds488" x1="0" y1="0" x2="1" y2="1"><stop offset="0" stop-color="#fbfbfc"/><stop offset="1" stop-color="#ececf0"/></linearGradient></defs>
<path fill="url(#ds488)" stroke="#d9d9de" stroke-width="0.8" d="M673.5,901.9L742.600,892.9Q745.500,892.5 745.500,895.5V942.7Q745.500,945.3 742.800,945.9L673,959Q670.200,959.5 670.200,956.6L670.700,905Q670.700,902.3 673.500,901.9Z"/>
<path fill="#dcdce2" d="M670.200,956.6Q670.200,959.5 673,959L742.800,945.9Q745.500,945.3 745.500,942.7L745.500,941L670.200,955Z"/>
<ellipse cx="704.100" cy="910.7" rx="4" ry="4.900" fill="none" stroke="#4fa9dc" stroke-width="1.100"/>
<ellipse cx="720.500" cy="908.4" rx="4" ry="4.900" fill="none" stroke="#4fa9dc" stroke-width="1.100"/>
<g fill="#2a2a30"><rect x="691" y="924.5" width="1.400" height="5.600"/><rect x="730.300" y="918.2" width="1.400" height="5.600"/>
<rect x="684.200" y="942" width="2.800" height="2.600"/><rect x="695.300" y="939.6" width="2.800" height="2.600"/>
<rect x="723.700" y="935.3" width="2.800" height="2.600"/><rect x="734.300" y="933.1" width="2.800" height="2.600"/></g></svg>
<svg class="b" style="left:660px;top:520px;" width="96" height="76" viewBox="660 520 96 76"><defs><linearGradient id="rl" x1="0" y1="0" x2="0.300" y2="1"><stop offset="0" stop-color="#fcfcfd"/><stop offset="1" stop-color="#efeff2"/></linearGradient></defs>
<path fill="#b7a898" d="M719.900,529.600L722,528.900Q723.300,528.900 723.300,530.200V535L719.900,533.400ZM730.300,534L732.700,533.200Q734,533.200 734,534.600V543.800L730.300,542Z"/>
<path fill="url(#rl)" d="M708.700,527L728,536.300Q730.500,537.500 730.800,540L731.200,548.300L745.900,556.800Q750,559.500 749.800,563L749.300,567.500Q748.500,572 742.500,577.700L729.500,587.300Q726,589.600 722.500,588.800L669.500,564.800Q665.800,562.500 666.100,559L666.900,554Q668,549.500 673.700,545L688,535.600Q690.500,534.200 693,534.600L695.500,534.900L706,527.800Q707.400,526.800 708.700,527Z"/>
<path fill="#e6e6ea" d="M666.700,555.300L723,580.800Q726.800,583.500 727.300,588.500Q725,589.400 722.500,588.800L669.500,564.800Q665.800,562.500 666.100,559Z"/>
<path fill="#f1f1f4" d="M723,580.800L744,567Q748.500,563.500 749.700,561L749.300,567.500Q748.500,572 742.500,577.700L729.500,587.300Q728.400,588.100 727.300,588.500Q726.800,583.500 723,580.800Z"/>
<path fill="none" stroke="#e9e9ed" stroke-width="0.900" d="M695.500,535L731,549M700,561L731.200,548.300"/>
<path fill="#e4e4e6" stroke="#55555a" stroke-width="0.700" d="M732,571.200L740.200,566.800V572.600L732,577Z"/>
<path fill="#fafafa" d="M733.200,572.600L739.200,569.400V572L733.200,575.200Z"/></svg>
<svg class="b" style="left:690px;top:640px;" width="40" height="82" viewBox="690 640 40 82"><defs><linearGradient id="bm" x1="0" y1="0" x2="1" y2="0"><stop offset="0" stop-color="#e9e9ed"/><stop offset=".35" stop-color="#fbfbfc"/><stop offset="1" stop-color="#ececf0"/></linearGradient></defs>
<rect x="705.500" y="712" width="6" height="5.200" rx="2.600" fill="#e4e4e8"/>
<path fill="url(#bm)" d="M699,654.500A10.300,10.300 0 0 1 719.600,654.500V712Q719.600,714.500 717,714.500H701.600Q699,714.500 699,712Z"/>
<path d="M699.500,667.500H719M703,671H716" stroke="#dcdce2" stroke-width="0.800" fill="none"/>
<rect x="707.500" y="690" width="4" height="16" rx="2" fill="none" stroke="#d4d4da" stroke-width="0.800"/>
<circle cx="701.300" cy="654" r="0.600" fill="#888"/><circle cx="701.300" cy="657.500" r="0.600" fill="#888"/></svg>
<svg class="b" style="left:664px;top:758px;" width="90" height="86" viewBox="664 758 90 86"><defs><linearGradient id="sk" x1="0" y1="0" x2="1" y2="1"><stop offset="0" stop-color="#f3f2f3"/><stop offset="1" stop-color="#dddbdd"/></linearGradient><linearGradient id="skh" x1="0" y1="0" x2="0" y2="1"><stop offset="0" stop-color="#0e0e10"/><stop offset=".55" stop-color="#3b3b3f"/><stop offset="1" stop-color="#d0cfd1"/></linearGradient></defs>
<rect x="672.400" y="766.500" width="70.800" height="69.600" rx="15" fill="url(#sk)"/>
<rect x="705.400" y="778.600" width="5" height="12.500" fill="url(#skh)"/>
<rect x="689.200" y="810.200" width="9.600" height="5.800" fill="#8e8c8e"/><rect x="716.800" y="810.200" width="9.600" height="5.800" fill="#8e8c8e"/></svg>
<svg class="b" style="left:676px;top:1002px;" width="64" height="88" viewBox="676 1002 64 88"><defs><linearGradient id="ps" x1="0" y1="0" x2="1" y2="0"><stop offset="0" stop-color="#ededf0"/><stop offset=".4" stop-color="#fbfbfc"/><stop offset="1" stop-color="#e6e6ea"/></linearGradient></defs>
<ellipse cx="707.800" cy="1077.800" rx="27" ry="5.600" fill="#e9e9ec"/>
<path fill="#dcdce0" d="M680.800,1077.800H734.800V1080.500Q734.800,1083.400 731.500,1083.400H684Q680.800,1083.400 680.800,1080.500Z"/>
<path fill="url(#ps)" d="M684.900,1014Q707.900,1005.400 730.900,1014V1058Q730.900,1072.500 716,1072.500H699.800Q684.900,1072.500 684.900,1058Z"/>
<rect x="704.600" y="1036.300" width="8" height="6.400" rx="2.600" fill="none" stroke="#b9b9c0" stroke-width="0.800"/><circle cx="708.600" cy="1039.500" r="1.300" fill="#a8a8b0"/></svg>
</main>
</body></html>
